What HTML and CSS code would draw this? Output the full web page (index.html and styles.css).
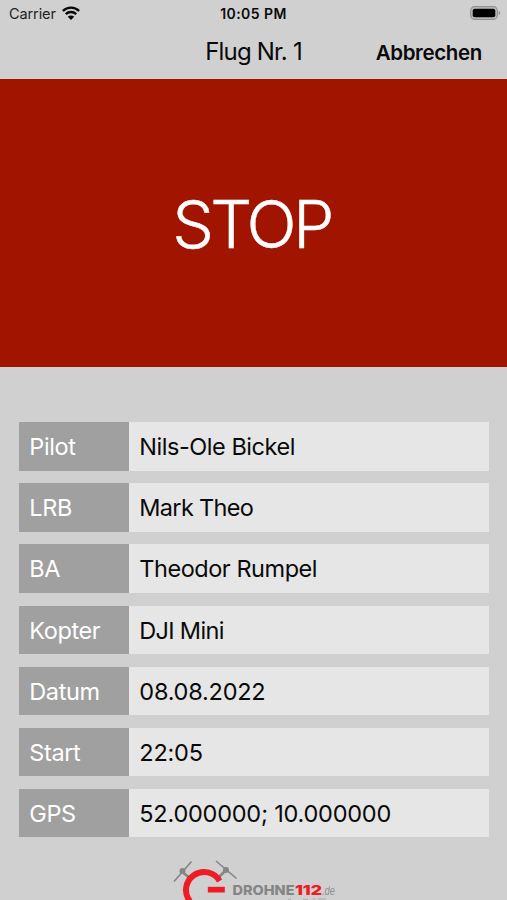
FILE: index.html
```html
<!DOCTYPE html>
<html lang="de">

<head>
    <meta charset="UTF-8">
    <meta name="viewport" content="width=device-width, initial-scale=1.0">
    <title>Flug Nr. 1</title>
    <link rel="stylesheet" href="styles.css">
</head>

<body>
    <div class="status-bar">
        <div class="carrier">
            <span class="carrier-name">Carrier</span>
            <svg class="wifi" width="18" height="14" viewBox="0 0 18 14">
                <path d="M.9 5a11.500 11.500 0 0 1 16.200 0M3.800 8.100a7.400 7.400 0 0 1 10.400 0" fill="none" stroke="#080808" stroke-width="2.400"/>
                <path d="M9 13.900 5.800 10.700a4.600 4.600 0 0 1 6.400 0z" fill="#080808"/>
            </svg>
        </div>
        <span class="clock">10:05 PM</span>
        <svg class="battery" width="31" height="15" viewBox="0 0 31 15">
            <rect x=".7" y=".7" width="26.600" height="12.600" rx="3.800" fill="#bdbdbd" stroke="#929292" stroke-width="1.200"/>
            <rect x="2.700" y="2.700" width="22.600" height="8.600" rx="2" fill="#000"/>
            <path d="M28.700 4.900v4.400q1.600-.6 1.600-2.200t-1.600-2.200z" fill="#929292"/>
        </svg>
    </div>

    <header class="navbar">
        <h1 class="title">Flug Nr. 1</h1>
        <span class="cancel">Abbrechen</span>
    </header>

    <div class="stop"><span class="stop-text">STOP</span></div>

    <main class="details">
        <div class="row">
            <div class="label">Pilot</div>
            <div class="value">Nils-Ole Bickel</div>
        </div>
        <div class="row">
            <div class="label">LRB</div>
            <div class="value short">Mark Theo</div>
        </div>
        <div class="row">
            <div class="label">BA</div>
            <div class="value">Theodor Rumpel</div>
        </div>
        <div class="row">
            <div class="label">Kopter</div>
            <div class="value short">DJI Mini</div>
        </div>
        <div class="row">
            <div class="label">Datum</div>
            <div class="value number">08.08.2022</div>
        </div>
        <div class="row">
            <div class="label">Start</div>
            <div class="value number">22:05</div>
        </div>
        <div class="row">
            <div class="label">GPS</div>
            <div class="value number">52.000000; 10.000000</div>
        </div>
    </main>

    <footer class="footer">
        <svg class="logo" width="170" height="43" viewBox="0 0 170 43">
            <!-- Rotoren -->
            <g stroke="#858585" fill="none">
                <path d="M4 24.500 21.500 4.500M46 4 66.500 21.500" stroke-width="1.600"/>
                <path d="m12 14.500 7 6M56 13l-7.500 7.500" stroke-width="2.600"/>
            </g>
            <circle cx="12.500" cy="14" r="3" fill="#858585"/>
            <circle cx="56" cy="12.900" r="3" fill="#858585"/>
            <!-- G -->
            <path d="M49.600 24A18 18 0 1 0 20 44.300" fill="none" stroke="#ee1c25" stroke-width="6"/>
            <path d="M37.800 29.800h17v5.700h-17z" fill="#ee1c25"/>
            <text class="logo-text" x="62.500" y="38" textLength="62" lengthAdjust="spacingAndGlyphs">DROHNE</text>
            <text class="logo-number" x="125" y="38" textLength="27" lengthAdjust="spacingAndGlyphs">112</text>
            <text class="logo-domain" x="152" y="38" textLength="13" lengthAdjust="spacingAndGlyphs">.de</text>
            <path d="M118 42.400h3M133 42.400h5M143 41.900h2M148 41.900h8" stroke="#aaa" stroke-width="1"/>
        </svg>
    </footer>
</body>

</html>
```
FILE: styles.css
```css
* {
    margin: 0;
    padding: 0;
    box-sizing: border-box;
}

body {
    width: 507px;
    height: 900px;
    overflow: hidden;
    font-family: Inter, "Liberation Sans", sans-serif;
    background: #d0d0d0;
    color: #0a0a0a;
    display: flex;
    flex-direction: column;
}

.status-bar {
    flex: none;
    height: 28px;
    padding: 0 6px 0 9px;
    display: grid;
    grid-template-columns: 1fr auto 1fr;
    align-items: center;
}

.carrier {
    display: flex;
    align-items: center;
    gap: 6px;
}

.carrier-name {
    font-size: 14.5px;
    letter-spacing: -0.1px;
    line-height: 16px;
    padding-bottom: 1px;
    color: #222;
}

.wifi {
    margin-top: -3px;
}

.clock {
    font-weight: 600;
    font-size: 14px;
    letter-spacing: 0.45px;
    margin-left: -3px;
    padding-bottom: 2px;
}

.battery {
    justify-self: end;
    margin-top: -1px;
}

.navbar {
    flex: none;
    height: 51px;
    padding: 0 25px;
    display: grid;
    grid-template-columns: 1fr auto 1fr;
    align-items: center;
}

.title {
    grid-column: 2;
    font-size: 24px;
    font-weight: 400;
    line-height: 46px;
    letter-spacing: -0.8px;
    padding-bottom: 4px;
}

.cancel {
    justify-self: end;
    font-size: 20.5px;
    font-weight: 600;
    letter-spacing: -0.35px;
    padding-bottom: 2px;
}

.stop {
    flex: none;
    height: 288px;
    display: flex;
    align-items: center;
    justify-content: center;
    background: #a01400;
    color: #fff;
    font-size: 66px;
    font-weight: 300;
    letter-spacing: -3.7px;
}

.stop-text {
    margin-left: -4px;
    padding-top: 1px;
    -webkit-text-stroke: 0.4px #fff;
}

.details {
    flex: none;
    padding: 55.3px 18.5px 0 19.3px;
    display: flex;
    flex-direction: column;
    gap: 12.6px;
    font-size: 23.5px;
}

.row {
    display: flex;
    height: 48.5px;
    line-height: 49px;
    white-space: nowrap;
}

.label {
    width: 110px;
    padding-left: 10px;
    background: #a0a0a0;
    color: #fff;
    letter-spacing: -0.4px;
}

.value {
    flex: 1;
    padding-left: 10px;
    background: #e6e6e6;
    letter-spacing: -0.46px;
}

.value.short {
    letter-spacing: -0.68px;
}

.value.number {
    letter-spacing: -0.23px;
}

.footer {
    padding: 19.6px 0 0 170px;
}

.logo {
    display: block;
}

.logo-text,
.logo-number {
    font-size: 13.5px;
    font-weight: 800;
    fill: #858585;
}

.logo-number {
    font-weight: 900;
    fill: #ee1c25;
}

.logo-domain {
    font-family: "Liberation Sans", sans-serif;
    font-size: 12px;
    font-style: italic;
    fill: #909090;
}
```
